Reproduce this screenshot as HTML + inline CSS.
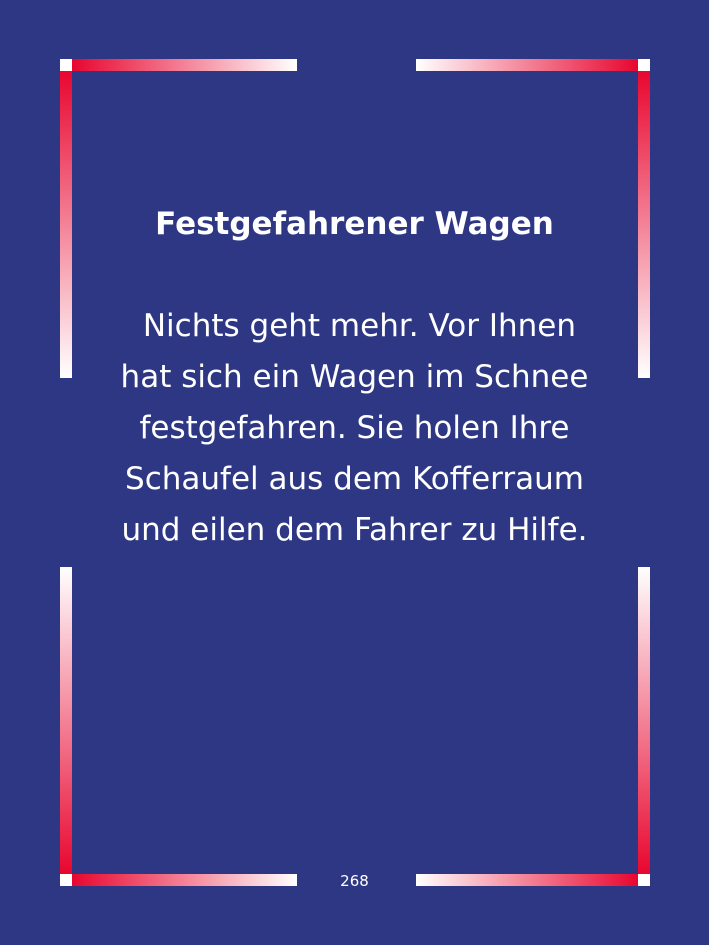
<!DOCTYPE html>
<html><head><meta charset="utf-8"><style>
html,body{margin:0;padding:0}
body{width:709px;height:945px;background:#2e3784;position:relative;overflow:hidden;font-family:"DejaVu Sans","Liberation Sans",sans-serif;color:#fff}
.b{position:absolute}
.sq{position:absolute;width:12px;height:12px;background:#fff}
.t{position:absolute;left:0;width:709px;text-align:center;white-space:nowrap}
</style></head><body>
<div class="sq" style="left:60px;top:59px"></div>
<div class="b" style="left:72px;top:59px;width:225px;height:12px;background:linear-gradient(to right,#e8062f,#fff)"></div>
<div class="b" style="left:60px;top:71px;width:12px;height:307px;background:linear-gradient(to bottom,#e8062f,#fff)"></div>
<div class="sq" style="left:638px;top:59px"></div>
<div class="b" style="left:416px;top:59px;width:222px;height:12px;background:linear-gradient(to left,#e8062f,#fff)"></div>
<div class="b" style="left:638px;top:71px;width:12px;height:307px;background:linear-gradient(to bottom,#e8062f,#fff)"></div>
<div class="sq" style="left:60px;top:874px"></div>
<div class="b" style="left:72px;top:874px;width:225px;height:12px;background:linear-gradient(to right,#e8062f,#fff)"></div>
<div class="b" style="left:60px;top:567px;width:12px;height:307px;background:linear-gradient(to top,#e8062f,#fff)"></div>
<div class="sq" style="left:638px;top:874px"></div>
<div class="b" style="left:416px;top:874px;width:222px;height:12px;background:linear-gradient(to left,#e8062f,#fff)"></div>
<div class="b" style="left:638px;top:567px;width:12px;height:307px;background:linear-gradient(to top,#e8062f,#fff)"></div>
<div class="t" style="top:204px;font-size:31px;font-weight:bold;line-height:40px">Festgefahrener Wagen</div>
<div class="t" style="top:301px;font-size:31px;line-height:51px">&nbsp;Nichts geht mehr. Vor Ihnen<br>hat sich ein Wagen im Schnee<br>festgefahren. Sie holen Ihre<br>Schaufel aus dem Kofferraum<br>und eilen dem Fahrer zu Hilfe.</div>
<div class="t" style="top:871px;font-size:15px;line-height:20px;left:0">268</div>
</body></html>
